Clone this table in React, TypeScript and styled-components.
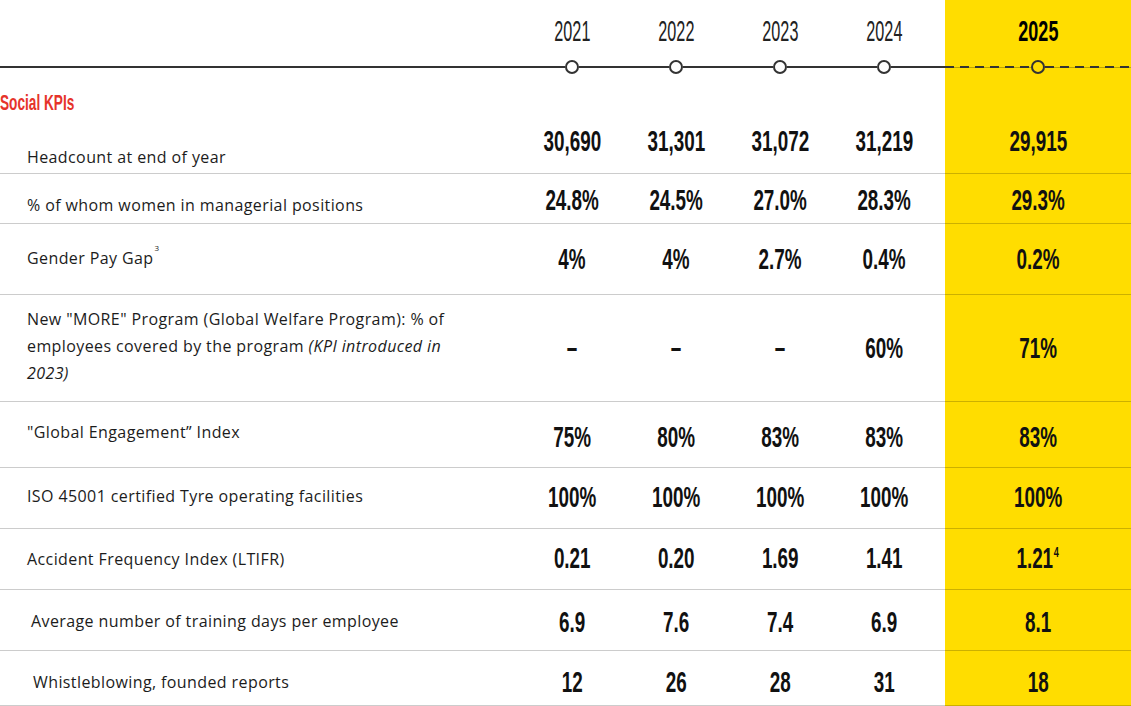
import React from 'react';
import styled, { createGlobalStyle } from 'styled-components';

const YELLOW = '#ffdd00';
const INK = '#1c1c1c';
const LINE = '#333333';
const COLUMNS = '520px repeat(4, 104px) 9px 1fr';
const CONDENSED = "'Liberation Sans Narrow', 'Liberation Sans', Arial, sans-serif";

const YEARS = ['2021', '2022', '2023', '2024'];
const CURRENT_YEAR = '2025';

const GlobalStyle = createGlobalStyle`
  html, body {
    margin: 0;
    padding: 0;
    background: #fff;
  }
  body {
    font-family: 'Open Sans', 'Liberation Sans', sans-serif;
    color: ${INK};
  }
`;

const shift = (s: number) =>
  s >= 0 ? `padding-top: ${s * 2}px;` : `padding-bottom: ${-s * 2}px;`;

const Table = styled.div`
  width: 1131px;
  background: linear-gradient(90deg, #fff 945px, ${YELLOW} 945px);
`;

const HeaderRow = styled.div`
  display: grid;
  grid-template-columns: ${COLUMNS};
  height: 74px;
`;

const HeadCell = styled.div`
  display: flex;
  flex-direction: column;
  align-items: center;
  justify-content: flex-end;
`;

const Year = styled.span<{ $current?: boolean }>`
  display: block;
  margin-bottom: 14px;
  font-family: ${CONDENSED};
  font-size: 30px;
  line-height: 30px;
  font-weight: ${({ $current }) => ($current ? 700 : 400)};
  color: ${({ $current }) => ($current ? '#000' : '#222')};
  transform: scaleX(${({ $current }) => ($current ? 0.6 : 0.54)});
`;

const Track = styled.div`
  display: flex;
  align-items: center;
  width: 100%;
  height: 14px;
`;

const Rule = styled.div<{ $dashed?: boolean }>`
  flex: 1;
  height: 2px;
  background: ${({ $dashed }) =>
    $dashed
      ? `repeating-linear-gradient(90deg, ${LINE} 0 9px, transparent 9px 15px),
         linear-gradient(rgba(0,0,0,0.25), rgba(0,0,0,0.25)) center / 100% 1px no-repeat`
      : LINE};
`;

const Dot = styled.span`
  flex: none;
  box-sizing: border-box;
  width: 14px;
  height: 14px;
  border: 2px solid ${LINE};
  border-radius: 50%;
`;

const SectionTitle = styled.h2`
  box-sizing: border-box;
  height: 46px;
  margin: 0;
  padding-top: 18px;
  font-family: ${CONDENSED};
  font-size: 22px;
  line-height: 22px;
  font-weight: 700;
  color: #e6332a;
  transform: scaleX(0.62);
  transform-origin: left center;
`;

const KpiRow = styled.div<{ $height: number }>`
  display: grid;
  grid-template-columns: ${COLUMNS};
  box-sizing: border-box;
  height: ${({ $height }) => $height}px;
  border-bottom: 1px solid rgba(0, 0, 0, 0.2);
`;

const LabelCell = styled.div<{ $shift: number; $indent: number }>`
  display: flex;
  align-items: center;
  padding-left: ${({ $indent }) => $indent}px;
  ${({ $shift }) => shift($shift)}
  font-size: 16px;
  line-height: 27px;
  letter-spacing: 0.4px;
  color: ${INK};

  em {
    font-style: italic;
  }
`;

const ValueCell = styled.div<{ $shift: number; $current?: boolean }>`
  display: flex;
  align-items: center;
  justify-content: center;
  ${({ $shift }) => shift($shift)}
  ${({ $current }) => $current && 'grid-column: 7;'}
`;

const Figure = styled.span`
  display: inline-block;
  font-family: ${CONDENSED};
  font-size: 29px;
  line-height: 30px;
  font-weight: 700;
  color: #111;
  transform: scaleX(0.65);
`;

const Note = styled.sup`
  font-size: 8px;
  line-height: 0;
  vertical-align: 13px;
  margin-left: 1px;
`;

const FigureNote = styled.sup`
  font-size: 14px;
  line-height: 0;
  vertical-align: 11px;
  margin-left: 1px;
`;

type Kpi = {
  label: React.ReactNode;
  values: string[];
  current: React.ReactNode;
  height: number;
  labelShift: number; // nudges the label off the row middle
  valueShift: number;
  indent?: number;
};

const KPIS: Kpi[] = [
  {
    label: 'Headcount at end of year',
    values: ['30,690', '31,301', '31,072', '31,219'],
    current: '29,915',
    height: 54,
    labelShift: 11,
    valueShift: -6,
  },
  {
    label: '% of whom women in managerial positions',
    values: ['24.8%', '24.5%', '27.0%', '28.3%'],
    current: '29.3%',
    height: 50,
    labelShift: 7,
    valueShift: 1,
  },
  {
    label: (
      <>
        Gender Pay Gap<Note>3</Note>
      </>
    ),
    values: ['4%', '4%', '2.7%', '0.4%'],
    current: '0.2%',
    height: 71,
    labelShift: -1,
    valueShift: 0,
  },
  {
    label: (
      <>
        New "MORE" Program (Global Welfare Program): % of
        <br />
        employees covered by the program <em>(KPI introduced in</em>
        <br />
        <em>2023)</em>
      </>
    ),
    values: ['–', '–', '–', '60%'],
    current: '71%',
    height: 107,
    labelShift: -2,
    valueShift: 0,
  },
  {
    label: '"Global Engagement” Index',
    values: ['75%', '80%', '83%', '83%'],
    current: '83%',
    height: 66,
    labelShift: -2,
    valueShift: 2,
  },
  {
    label: 'ISO 45001 certified Tyre operating facilities',
    values: ['100%', '100%', '100%', '100%'],
    current: '100%',
    height: 61,
    labelShift: -2,
    valueShift: -1,
  },
  {
    label: 'Accident Frequency Index (LTIFR)',
    values: ['0.21', '0.20', '1.69', '1.41'],
    current: (
      <>
        1.21<FigureNote>4</FigureNote>
      </>
    ),
    height: 61,
    labelShift: 0,
    valueShift: -1,
  },
  {
    label: 'Average number of training days per employee',
    values: ['6.9', '7.6', '7.4', '6.9'],
    current: '8.1',
    height: 61,
    labelShift: 1,
    valueShift: 2,
    indent: 31,
  },
  {
    label: 'Whistleblowing, founded reports',
    values: ['12', '26', '28', '31'],
    current: '18',
    height: 55,
    labelShift: 4,
    valueShift: 4,
    indent: 33,
  },
];

const App = () => {
  return (
    <>
      <GlobalStyle />
      <Table>
        <HeaderRow>
          <HeadCell>
            <Track>
              <Rule />
            </Track>
          </HeadCell>
          {YEARS.map((year) => (
            <HeadCell key={year}>
              <Year>{year}</Year>
              <Track>
                <Rule />
                <Dot />
                <Rule />
              </Track>
            </HeadCell>
          ))}
          <HeadCell>
            <Track>
              <Rule />
            </Track>
          </HeadCell>
          <HeadCell>
            <Year $current>{CURRENT_YEAR}</Year>
            <Track>
              <Rule $dashed />
              <Dot />
              <Rule $dashed />
            </Track>
          </HeadCell>
        </HeaderRow>

        <SectionTitle>Social KPIs</SectionTitle>

        {KPIS.map((kpi, index) => (
          <KpiRow key={index} $height={kpi.height}>
            <LabelCell $shift={kpi.labelShift} $indent={kpi.indent ?? 27}>
              <span>{kpi.label}</span>
            </LabelCell>
            {kpi.values.map((value, i) => (
              <ValueCell key={i} $shift={kpi.valueShift}>
                <Figure>{value}</Figure>
              </ValueCell>
            ))}
            <ValueCell $shift={kpi.valueShift} $current>
              <Figure>{kpi.current}</Figure>
            </ValueCell>
          </KpiRow>
        ))}
      </Table>
    </>
  );
};

export default App;
